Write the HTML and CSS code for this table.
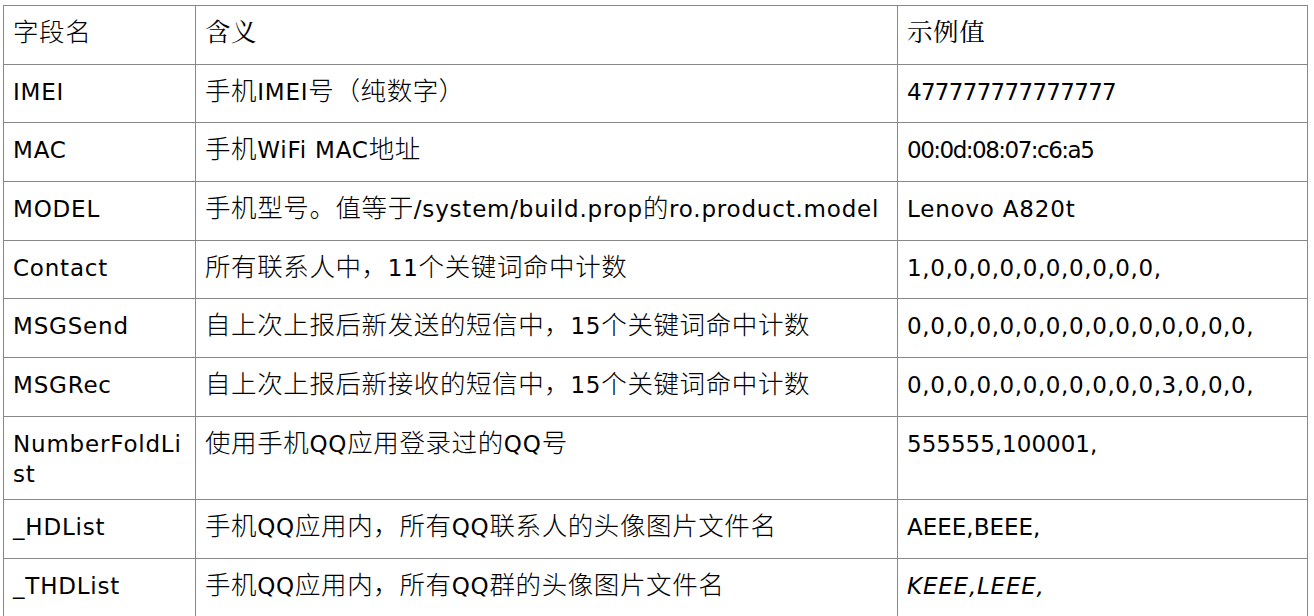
FILE: index.html
```html
<!DOCTYPE html>
<html lang="zh-CN">
<head>
<meta charset="utf-8">
<title>字段说明</title>
<link rel="stylesheet" href="styles.css">
</head>
<body>
<table class="fields">
  <colgroup>
    <col class="c-name">
    <col class="c-desc">
    <col class="c-val">
  </colgroup>
  <tr class="head">
    <td><span class="zh">字段名</span></td>
    <td><span class="zh serif">含义</span></td>
    <td><span class="zh serif">示例值</span></td>
  </tr>
  <tr>
    <td>IMEI</td>
    <td><span class="zh">手机</span>IMEI<span class="zh">号（纯数字）</span></td>
    <td class="tight">477777777777777</td>
  </tr>
  <tr>
    <td>MAC</td>
    <td><span class="zh">手机</span>WiFi MAC<span class="zh">地址</span></td>
    <td class="tighter">00:0d:08:07:c6:a5</td>
  </tr>
  <tr>
    <td>MODEL</td>
    <td><span class="zh">手机型号。值等于</span>/system/build.prop<span class="zh">的</span>ro.product.model</td>
    <td>Lenovo A820t</td>
  </tr>
  <tr>
    <td>Contact</td>
    <td><span class="zh">所有联系人中，</span>11<span class="zh">个关键词命中计数</span></td>
    <td class="list">1,0,0,0,0,0,0,0,0,0,0,</td>
  </tr>
  <tr>
    <td>MSGSend</td>
    <td><span class="zh">自上次上报后新发送的短信中，</span>15<span class="zh">个关键词命中计数</span></td>
    <td class="list">0,0,0,0,0,0,0,0,0,0,0,0,0,0,0,</td>
  </tr>
  <tr>
    <td>MSGRec</td>
    <td><span class="zh">自上次上报后新接收的短信中，</span>15<span class="zh">个关键词命中计数</span></td>
    <td class="list">0,0,0,0,0,0,0,0,0,0,0,3,0,0,0,</td>
  </tr>
  <tr>
    <td class="wrap">NumberFoldList</td>
    <td><span class="zh">使用手机</span>QQ<span class="zh">应用登录过的</span>QQ<span class="zh">号</span></td>
    <td class="plain">555555,100001,</td>
  </tr>
  <tr>
    <td>_HDList</td>
    <td><span class="zh">手机</span>QQ<span class="zh">应用内，所有</span>QQ<span class="zh">联系人的头像图片文件名</span></td>
    <td class="plain">AEEE,BEEE,</td>
  </tr>
  <tr>
    <td>_THDList</td>
    <td><span class="zh">手机</span>QQ<span class="zh">应用内，所有</span>QQ<span class="zh">群的头像图片文件名</span></td>
    <td class="ital">KEEE,LEEE,</td>
  </tr>
</table>
</body>
</html>
```

FILE: styles.css
```css
html, body {
  margin: 0;
  padding: 0;
  background: #ffffff;
}

body {
  padding: 5px 0 0 3px;
  font-family: "DejaVu Sans", "Noto Sans CJK SC", sans-serif;
  font-size: 23px;
  line-height: 30px;
  letter-spacing: 0.8px;
  color: #000000;
}

.fields {
  border-collapse: collapse;
  table-layout: fixed;
  width: 1304px;
}

.c-name { width: 192px; }
.c-desc { width: 702px; }
.c-val { width: 410px; }

.fields tr {
  height: 58.7px;
}

.fields td {
  border: 1px solid #888888;
  padding: 12px 9px 10px 9px;
  vertical-align: top;
  text-align: left;
}

.zh {
  font-family: "Noto Sans CJK SC", sans-serif;
  font-size: 25.5px;
  line-height: 24px;
  letter-spacing: 0.6px;
  font-weight: 300;
}

.zh.serif {
  font-family: "Noto Serif CJK SC", "Noto Sans CJK SC", serif;
  font-weight: 400;
}

.fields .wrap {
  word-break: break-all;
}

.fields .tight {
  letter-spacing: -0.7px;
}

.fields .tighter {
  letter-spacing: -1.5px;
}

.fields .list {
  letter-spacing: 0.6px;
}

.fields .plain {
  letter-spacing: 0;
}

.fields .ital {
  font-style: italic;
}
```
